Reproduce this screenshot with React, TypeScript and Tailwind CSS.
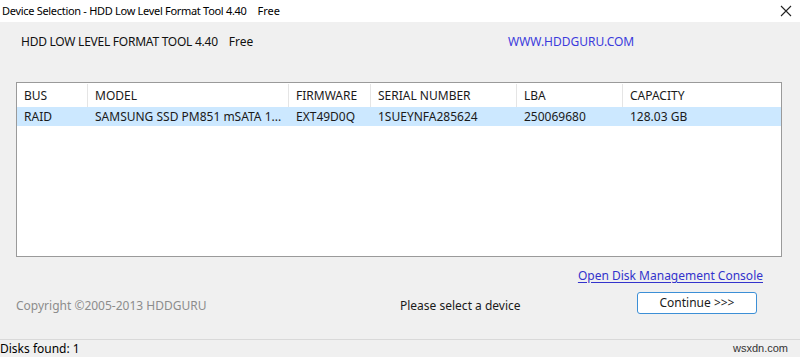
import React from "react";

const cols = [
  { label: "BUS", w: "w-[71px]" },
  { label: "MODEL", w: "w-[201px]" },
  { label: "FIRMWARE", w: "w-[82px]" },
  { label: "SERIAL NUMBER", w: "w-[146px]" },
  { label: "LBA", w: "w-[106px]" },
  { label: "CAPACITY", w: "flex-1" },
];

const row = ["RAID", "SAMSUNG SSD PM851 mSATA 1...", "EXT49D0Q", "1SUEYNFA285624", "250069680", "128.03 GB"];

export default function App() {
  return (
    <div
      className="w-[800px] h-[357px] bg-[#f0f0f0] flex flex-col text-[12px] text-[#1a1a1a] overflow-hidden"
      style={{ fontFamily: '"Noto Sans", "Open Sans", sans-serif' }}
    >
      {/* Title bar */}
      <div className="h-[22px] bg-white flex items-center justify-between pl-[2px] pr-[7px] shrink-0">
        <div className="flex items-center text-black text-[11px]">
          <span className="tracking-[-0.3px]">Device Selection - HDD Low Level Format Tool 4.40</span>
          <span className="ml-[11px]">Free</span>
        </div>
        <svg width="12" height="12" viewBox="0 0 12 12" className="mr-[1px]">
          <path d="M1 1 L11 11 M11 1 L1 11" stroke="#222" strokeWidth="1.1" />
        </svg>
      </div>

      {/* Header */}
      <div className="h-[40px] flex items-center shrink-0">
        <div className="ml-[21px] w-[487px] flex items-center text-[#111]">
          <span className="tracking-[-0.25px]">HDD LOW LEVEL FORMAT TOOL 4.40</span>
          <span className="ml-[11px]">Free</span>
        </div>
        <span className="text-[#3b3bdc]">WWW.HDDGURU.COM</span>
      </div>

      {/* Table */}
      <div className="mt-[20px] ml-[16px] w-[766px] h-[175px] bg-white border border-[#9a9a9a] shrink-0 flex flex-col pt-[1px]">
        <div className="flex h-[23px] items-center">
          {cols.map((c, i) => (
            <div
              key={i}
              className={`${c.w} h-full flex items-center pl-[7px] ${i < cols.length - 1 ? "border-r border-[#e5e5e5]" : ""}`}
            >
              {c.label}
            </div>
          ))}
        </div>
        <div className="flex h-[19px] items-center bg-[#cce8ff]">
          {cols.map((c, i) => (
            <div key={i} className={`${c.w} h-full flex items-center pl-[7px] ${i < cols.length - 1 ? "border-r border-transparent" : ""}`}>
              {row[i]}
            </div>
          ))}
        </div>
      </div>

      {/* Link row */}
      <div className="h-[38px] flex items-center justify-end pr-[37px] shrink-0">
        <span className="text-[#3333cc] underline underline-offset-2">Open Disk Management Console</span>
      </div>

      {/* Bottom row */}
      <div className="flex items-center h-[22px] shrink-0">
        <span className="ml-[16px] w-[384px] text-[#8c8c8c]">Copyright ©2005-2013 HDDGURU</span>
        <span className="w-[237px] text-[#1a1a1a]">Please select a device</span>
        <button className="w-[120px] h-[22px] mt-[-6px] bg-white border border-[#3c8fd6] rounded-[3px] text-[#1a1a1a] flex items-center justify-center">
          Continue &gt;&gt;&gt;
        </button>
      </div>

      <div className="flex-1" />

      {/* Status bar */}
      <div className="h-[18px] border-t border-[#d9d9d9] flex items-center justify-between shrink-0">
        <span className="text-black pl-0">Disks found: 1</span>
        <span className="text-[#333] text-[11px] pr-[12px]" style={{ fontFamily: '"Liberation Sans", Arial, sans-serif' }}>
          wsxdn.com
        </span>
      </div>
    </div>
  );
}
